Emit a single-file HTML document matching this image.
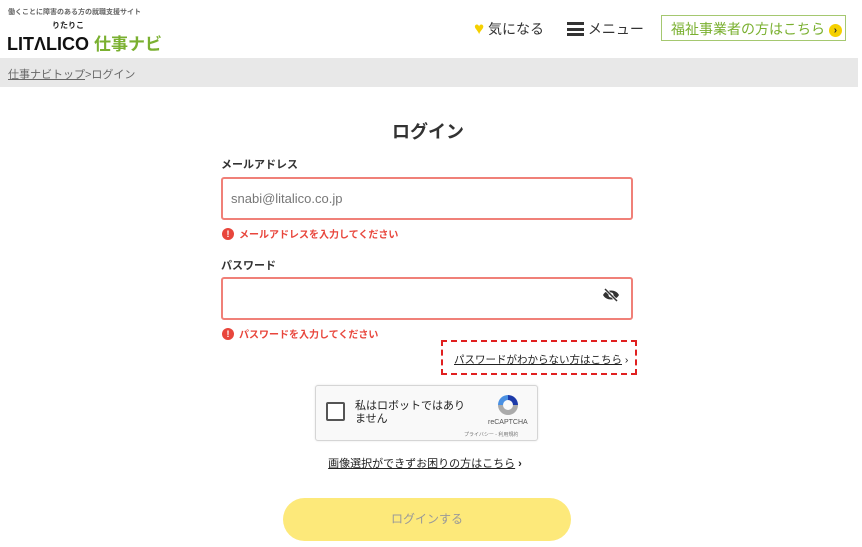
<!DOCTYPE html>
<html><head><meta charset="utf-8"><style>
*{margin:0;padding:0;box-sizing:border-box}
body{width:862px;height:547px;overflow:hidden;background:#fff;font-family:"Liberation Sans","Noto Sans CJK JP",sans-serif;color:#333;position:relative}
.a{position:absolute;white-space:nowrap}
.err{color:#e8463c;font-size:10px;font-weight:bold;display:flex;align-items:center;gap:5px}
.ei{width:12px;height:12px;border-radius:50%;background:#e8463c;color:#fff;font-size:9px;text-align:center;line-height:12px}
.inp{border:2px solid #f08078;border-radius:3px;width:412px;height:43px;left:221px}
</style></head><body>
<div class="a" style="left:8px;top:7px;font-size:7px;color:#666;font-weight:bold">働くことに障害のある方の就職支援サイト</div>
<div class="a" style="left:52px;top:20px;font-size:8px;font-weight:bold;color:#222">りたりこ</div>
<div class="a" style="left:7px;top:30px;font-size:18px;font-weight:900;color:#111">LITΛLICO <span style="color:#7ab030;font-weight:bold;font-size:17px">仕事ナビ</span></div>
<div class="a" style="left:474px;top:19px;font-size:14px;color:#333"><span style="color:#f5d000;font-size:17px">♥</span> 気になる</div>
<div class="a" style="left:567px;top:19px;font-size:14px;color:#333"><span style="display:inline-block;width:17px;height:14px;border-top:3px solid #333;border-bottom:3px solid #333;position:relative;vertical-align:-2px"><span style="position:absolute;left:0;right:0;top:3px;height:3px;background:#333"></span></span> メニュー</div>
<div class="a" style="left:661px;top:15px;width:185px;height:26px;border:1px solid #a5c870;color:#7ab030;font-size:14px;padding:3px 0 0 9px">福祉事業者の方はこちら <span style="display:inline-block;width:13px;height:13px;border-radius:50%;background:#f5d000;color:#333;font-size:10px;text-align:center;line-height:13px;font-weight:bold;vertical-align:1px">›</span></div>
<div class="a" style="left:0;top:58px;width:858px;height:29px;background:#e8e8e8;font-size:11px;color:#666;padding:8px 8px"><span style="text-decoration:underline">仕事ナビトップ</span>&gt;ログイン</div>
<div class="a" style="left:0;width:856px;top:118px;text-align:center;font-size:18px;font-weight:bold;color:#333">ログイン</div>
<div class="a" style="left:221px;top:156px;font-size:11px;font-weight:bold">メールアドレス</div>
<div class="a inp" style="top:177px;font-size:13px;color:#777;padding:12px 0 0 8px">snabi@litalico.co.jp</div>
<div class="a err" style="left:222px;top:226px"><span class="ei">!</span>メールアドレスを入力してください</div>
<div class="a" style="left:221px;top:257px;font-size:11px;font-weight:bold">パスワード</div>
<div class="a inp" style="top:277px"></div>
<svg class="a" style="left:602px;top:288px" width="18" height="14" viewBox="0 0 18 14"><path d="M1 7C4 1 14 1 17 7C14 13 4 13 1 7Z" fill="#333"/><circle cx="9" cy="7" r="2.5" fill="#fff"/><line x1="3" y1="1" x2="15" y2="13" stroke="#fff" stroke-width="3"/><line x1="3" y1="1" x2="15" y2="13" stroke="#333" stroke-width="1.5"/></svg>
<div class="a err" style="left:222px;top:326px"><span class="ei">!</span>パスワードを入力してください</div>
<div class="a" style="left:441px;top:340px;width:196px;height:35px;border:2px dashed #e02020;font-size:10.5px;padding:10px 0 0 11px;color:#222"><span style="text-decoration:underline">パスワードがわからない方はこちら</span> ›</div>
<div class="a" style="left:315px;top:385px;width:223px;height:56px;border:1px solid #d5d5d5;border-radius:3px;background:#f9f9f9;box-shadow:0 0 2px rgba(0,0,0,.1)"></div>
<div class="a" style="left:326px;top:402px;width:19px;height:19px;border:2px solid #555;border-radius:2px;background:#fff"></div>
<div class="a" style="left:355px;top:400px;font-size:11px;color:#222;line-height:13px">私はロボットではあり<br>ません</div>
<svg class="a" style="left:496px;top:393px" width="24" height="24" viewBox="0 0 24 24"><path d="M12 2A10 10 0 0 1 22 12H17A5 5 0 0 0 12 7Z" fill="#1c3aa9"/><path d="M12 2A10 10 0 0 0 2 12H7A5 5 0 0 1 12 7Z" fill="#4a90e2"/><path d="M2 12A10 10 0 0 0 22 12H17A5 5 0 0 1 7 12Z" fill="#aaa"/></svg>
<div class="a" style="left:488px;top:419px;font-size:7px;color:#555">reCAPTCHA</div>
<div class="a" style="left:464px;top:431px;font-size:5px;color:#777">プライバシー - 利用規約</div>
<div class="a" style="left:0;width:850px;top:455px;text-align:center;font-size:11px;color:#222;font-weight:bold"><span style="text-decoration:underline;font-weight:normal">画像選択ができずお困りの方はこちら</span> ›</div>
<div class="a" style="left:283px;top:498px;width:288px;height:43px;border-radius:22px;background:#fde97a;color:#999;font-size:12px;text-align:center;line-height:43px">ログインする</div>
</body></html>
